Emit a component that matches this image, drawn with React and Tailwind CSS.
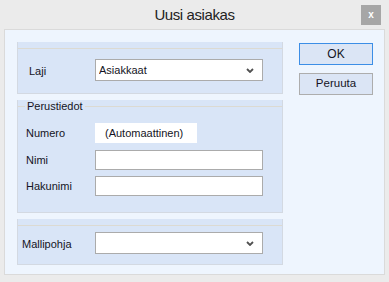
import React from "react";

function Chevron() {
  return (
    <svg width="8" height="5" viewBox="0 0 8 5" className="shrink-0">
      <polyline points="1,1 4,4 7,1" fill="none" stroke="#505050" strokeWidth="1.8" />
    </svg>
  );
}

function Select({ value }) {
  return (
    <div className="w-[168px] h-[22px] bg-white border border-[#ababab] flex items-center pl-[3px] pr-[8px]">
      <span className="flex-1 truncate">{value}</span>
      <Chevron />
    </div>
  );
}

function TextBox() {
  return <div className="w-[168px] h-[20px] bg-white border border-[#ababab]" />;
}

export default function App() {
  return (
    <div
      className="w-[389px] h-[282px] bg-[#ebebeb] flex flex-col text-[11px] text-[#141424]"
      style={{ fontFamily: '"Liberation Sans", Arial, sans-serif' }}
    >
      {/* title bar */}
      <div className="relative h-[29px] flex items-center justify-center">
        <span className="text-[15px] tracking-[-0.4px] text-[#222] mt-[1px]">Uusi asiakas</span>
        <div className="absolute right-[8px] top-[5px] w-[20px] h-[20px] bg-[#a6a6a6] flex items-center justify-center text-white text-[10px] font-bold leading-none">
          x
        </div>
      </div>

      {/* main panel */}
      <div className="mx-[4px] h-[246px] bg-[#eef5fe] border border-[#dadada] flex pt-[12px] pl-[12px]">
        <div className="w-[266px] flex flex-col gap-[6px]">
          {/* Laji */}
          <div className="h-[52px] bg-[#d9e5f7] border-x border-b border-[#d3d9e2] flex flex-col">
            <div className="h-[6px]" />
            <div className="border-t border-[#dcdad2] flex-1 flex items-start pt-[10px] pl-[11px]">
              <span className="w-[66px] mt-[4px]">Laji</span>
              <Select value="Asiakkaat" />
            </div>
          </div>

          {/* Perustiedot */}
          <div className="h-[113px] bg-[#d9e5f7] border-x border-b border-[#d3d9e2] flex flex-col">
            <div className="h-[12px] flex items-center">
              <div className="w-[7px] border-t border-[#dcdad2]" />
              <span className="px-[2px]">Perustiedot</span>
              <div className="flex-1 border-t border-[#dcdad2]" />
            </div>
            <div className="flex items-center mt-[11px] pl-[8px]">
              <span className="w-[69px]">Numero</span>
              <div className="w-[102px] h-[20px] bg-white flex items-center pl-[10px]">(Automaattinen)</div>
            </div>
            <div className="flex items-center mt-[7px] pl-[8px]">
              <span className="w-[69px]">Nimi</span>
              <TextBox />
            </div>
            <div className="flex items-center mt-[6px] pl-[8px]">
              <span className="w-[69px]">Hakunimi</span>
              <TextBox />
            </div>
          </div>

          {/* Mallipohja */}
          <div className="h-[46px] bg-[#d9e5f7] border-x border-b border-[#d3d9e2] flex flex-col">
            <div className="h-[6px]" />
            <div className="border-t border-[#dcdad2] flex-1 flex items-start pt-[6px] pl-[4px]">
              <span className="w-[73px] mt-[4px]">Mallipohja</span>
              <Select value="" />
            </div>
          </div>
        </div>

        {/* buttons */}
        <div className="flex flex-col gap-[8px] pt-[1px] ml-[16px]">
          <div className="w-[74px] h-[22px] bg-[#dbe5f5] border border-[#3c8ee6] flex items-center justify-center text-[12px]">
            OK
          </div>
          <div className="w-[74px] h-[22px] bg-[#dbe5f5] border border-[#adadad] flex items-center justify-center text-[11.5px]">
            Peruuta
          </div>
        </div>
      </div>
    </div>
  );
}
